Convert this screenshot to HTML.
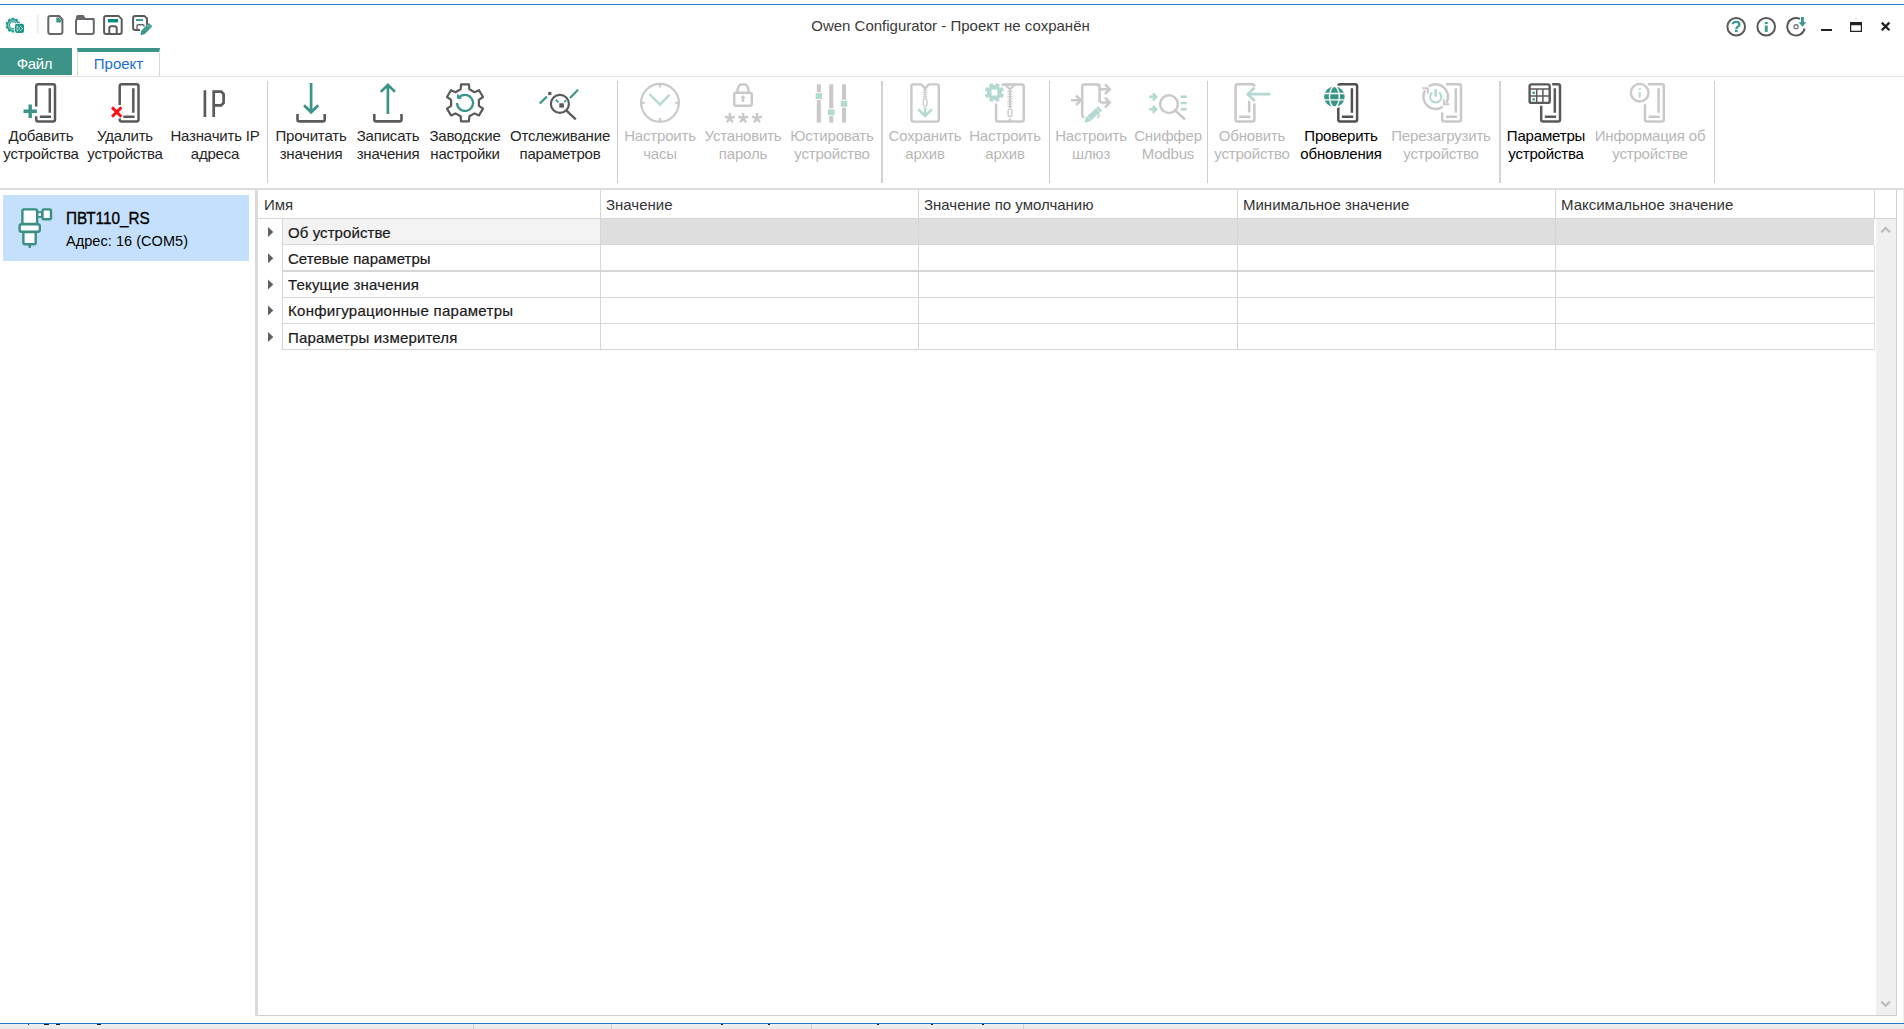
<!DOCTYPE html>
<html lang="ru">
<head>
<meta charset="utf-8">
<title>Owen Configurator</title>
<style>
html,body{margin:0;padding:0;background:#fff;}
body{width:1904px;height:1029px;position:relative;overflow:hidden;font-family:"Liberation Sans",sans-serif;font-size:15px;color:#1e1e1e;}
.abs{position:absolute;}
#topline{left:0;top:4px;width:1904px;height:1px;background:#1b7bd0;}
#botline{left:0;top:1023px;width:1904px;height:1px;background:#1b7bd0;}
#botband{left:0;top:1024px;width:1904px;height:5px;background:linear-gradient(#f1f1f1,#e7e7e7);}
.bm{top:1024px;height:1px;background:#1a1a1a;}
.bt{top:1024px;width:1px;height:5px;background:#cfcfcf;}
#title{left:0;top:17px;width:1901px;text-align:center;line-height:18px;color:#3a3a3a;}
#tabfile{left:0;top:48px;width:72px;height:27px;box-sizing:border-box;padding-right:3px;letter-spacing:-.35px;background:#3c9488;color:#fff;text-align:center;line-height:31px;}
#tabproj{left:77px;top:48px;width:83px;height:29px;box-sizing:border-box;border:1px solid #d9d9d9;border-top:4px solid #3c9488;border-bottom:none;background:#fff;color:#1a6fd0;text-align:center;line-height:23px;}
#tabline{left:0;top:76px;width:1904px;height:1px;background:#e4e4e4;}
#ribline{left:0;top:188px;width:1904px;height:2px;background:#dedede;}
.sep{top:81px;width:1px;height:102px;background:#cfcfcf;}
.lbl{top:127px;width:140px;text-align:center;line-height:18px;color:#262626;white-space:nowrap;letter-spacing:-0.18px;}
.lbl.d{color:#b7b7b7;}
#tile{left:3px;top:195px;width:246px;height:66px;background:#c4e0fc;}
#dname{left:66px;top:209px;font-size:17px;line-height:20px;color:#000;transform:scaleX(.9);transform-origin:0 0;-webkit-text-stroke:.35px #000;white-space:nowrap;}
#daddr{left:66px;top:232.5px;font-size:14.5px;line-height:17px;color:#000;white-space:nowrap;letter-spacing:.05px;}
#split{left:255px;top:190px;width:3px;height:826px;background:#dadada;}
#grid{left:258px;top:190px;width:1639px;height:826px;box-sizing:border-box;border-bottom:1px solid #d0d0d0;border-right:1px solid #d0d0d0;}
.hd{top:196px;line-height:18px;color:#333;white-space:nowrap;}
.vl{width:1px;background:#d6d6d6;}
.hl{height:1px;background:#d6d6d6;left:283px;width:1591px;}
.rt{left:288px;line-height:18px;color:#1a1a1a;white-space:nowrap;-webkit-text-stroke:.2px #1a1a1a;}
</style>
</head>
<body>
<div class="abs" id="topline"></div>
<div class="abs" id="title">Owen Configurator - Проект не сохранён</div>
<div class="abs" id="tabfile">Файл</div>
<div class="abs" id="tabproj">Проект</div>
<div class="abs" id="tabline"></div>
<div class="abs" id="ribline"></div>

<!-- ribbon separators -->
<div class="abs sep" style="left:267px"></div>
<div class="abs sep" style="left:617px"></div>
<div class="abs sep" style="left:881px;width:2px;background:#d4d4d4"></div>
<div class="abs sep" style="left:1049px"></div>
<div class="abs sep" style="left:1207px"></div>
<div class="abs sep" style="left:1499px;width:2px;background:#d4d4d4"></div>
<div class="abs sep" style="left:1714px"></div>

<!-- ribbon labels -->
<div class="abs lbl" style="left:-29px">Добавить<br>устройства</div>
<div class="abs lbl" style="left:55px">Удалить<br>устройства</div>
<div class="abs lbl" style="left:145px">Назначить IP<br>адреса</div>
<div class="abs lbl" style="left:241px">Прочитать<br>значения</div>
<div class="abs lbl" style="left:318px">Записать<br>значения</div>
<div class="abs lbl" style="left:395px">Заводские<br>настройки</div>
<div class="abs lbl" style="left:490px">Отслеживание<br>параметров</div>
<div class="abs lbl d" style="left:590px">Настроить<br>часы</div>
<div class="abs lbl d" style="left:673px">Установить<br>пароль</div>
<div class="abs lbl d" style="left:762px">Юстировать<br>устройство</div>
<div class="abs lbl d" style="left:855px">Сохранить<br>архив</div>
<div class="abs lbl d" style="left:935px">Настроить<br>архив</div>
<div class="abs lbl d" style="left:1021px">Настроить<br>шлюз</div>
<div class="abs lbl d" style="left:1098px">Сниффер<br>Modbus</div>
<div class="abs lbl d" style="left:1182px">Обновить<br>устройство</div>
<div class="abs lbl" style="left:1271px;color:#000">Проверить<br>обновления</div>
<div class="abs lbl d" style="left:1371px">Перезагрузить<br>устройство</div>
<div class="abs lbl" style="left:1476px;color:#000">Параметры<br>устройства</div>
<div class="abs lbl d" style="left:1580px">Информация об<br>устройстве</div>

<!-- left device panel -->
<div class="abs" id="tile"></div>
<div class="abs" id="dname">ПВТ110_RS</div>
<div class="abs" id="daddr">Адрес: 16 (COM5)</div>
<div class="abs" id="split"></div>

<!-- grid -->
<div class="abs" id="grid"></div>
<div class="abs" style="left:283px;top:219px;width:317px;height:25px;background:#f3f3f3"></div>
<div class="abs" style="left:601px;top:219px;width:1273px;height:25px;background:#dedede"></div>
<div class="abs" style="left:1876px;top:219px;width:20px;height:796px;background:#f0f0f0"></div>
<div class="abs hd" style="left:264px">Имя</div>
<div class="abs hd" style="left:606px">Значение</div>
<div class="abs hd" style="left:924px">Значение по умолчанию</div>
<div class="abs hd" style="left:1243px">Минимальное значение</div>
<div class="abs hd" style="left:1561px">Максимальное значение</div>
<div class="abs" style="left:258px;top:218px;width:1638px;height:1px;background:#d6d6d6"></div>
<div class="abs vl" style="left:600px;top:190px;height:160px"></div>
<div class="abs vl" style="left:918px;top:190px;height:160px"></div>
<div class="abs vl" style="left:1237px;top:190px;height:160px"></div>
<div class="abs vl" style="left:1555px;top:190px;height:160px"></div>
<div class="abs vl" style="left:1874px;top:190px;height:28px"></div>
<div class="abs vl" style="left:282px;top:219px;height:131px"></div>
<div class="abs vl" style="left:1874px;top:245px;height:105px;background:#e2e2e2"></div>
<div class="abs hl" style="top:244px"></div>
<div class="abs hl" style="top:270px;height:2px"></div>
<div class="abs hl" style="top:297px"></div>
<div class="abs hl" style="top:323px"></div>
<div class="abs hl" style="top:349px"></div>
<div class="abs rt" style="top:224px;letter-spacing:.08px">Об устройстве</div>
<div class="abs rt" style="top:250px;letter-spacing:.02px">Сетевые параметры</div>
<div class="abs rt" style="top:276px;letter-spacing:.18px">Текущие значения</div>
<div class="abs rt" style="top:302px;letter-spacing:.28px">Конфигурационные параметры</div>
<div class="abs rt" style="top:329px;letter-spacing:.17px">Параметры измерителя</div>

<div class="abs" id="redge" style="left:1903px;top:190px;width:1px;height:833px;background:#ededed"></div>
<div class="abs" id="botline"></div>
<div class="abs" id="botband"></div>
<div class="abs bm" style="left:28px;width:1px"></div>
<div class="abs bm" style="left:44px;width:5px"></div>
<div class="abs bm" style="left:56px;width:4px"></div>
<div class="abs bm" style="left:97px;width:4px"></div>
<div class="abs bm" style="left:721px;width:2px"></div>
<div class="abs bm" style="left:768px;width:2px"></div>
<div class="abs bm" style="left:877px;width:2px"></div>
<div class="abs bm" style="left:931px;width:2px"></div>
<div class="abs bm" style="left:982px;width:2px"></div>
<div class="abs bt" style="left:473px"></div>
<div class="abs bt" style="left:611px"></div>
<div class="abs bt" style="left:811px"></div>
<div class="abs bt" style="left:1023px"></div>

<!-- ICONS -->
<svg class="abs" style="left:0;top:0" width="1904" height="1029" viewBox="0 0 1904 1029" fill="none">
<!-- title bar: app icon -->
<path d="M19.3 25.5L20.4 26.2L19.7 28.6L18.4 28.5L17.9 29.1L18.5 30.3L16.4 31.9L15.4 31.0L14.7 31.3L14.4 32.6L11.8 32.6L11.5 31.3L10.8 31.1L9.8 32.0L7.7 30.5L8.2 29.3L7.7 28.7L6.4 28.8L5.6 26.4L6.7 25.7L6.7 24.9L5.6 24.2L6.3 21.8L7.6 21.9L8.1 21.3L7.5 20.1L9.6 18.5L10.6 19.4L11.3 19.1L11.6 17.8L14.2 17.8L14.5 19.1L15.2 19.3L16.2 18.4L18.3 19.9L17.8 21.1L18.3 21.7L19.6 21.6L20.4 24.0L19.3 24.7ZM13 22.300a2.900 2.900 0 1 0 0 5.800a2.900 2.900 0 1 0 0-5.800z" fill="#2a9b8e" fill-rule="evenodd"/>
<circle cx="13" cy="25.200" r="4.500" stroke="#bfe5df" stroke-width=".8"/>
<rect x="14.200" y="23" width="10.800" height="11" rx="2.500" fill="#fff"/>
<rect x="15" y="23.800" width="9" height="9.200" rx="2" fill="#1f9587"/>
<path d="M17 25.800l3 2.700-3 2.700zM19.800 25.800l3 2.700-3 2.700" fill="#1f9587" stroke="#cfeee9" stroke-width=".8"/>
<rect x="37" y="15" width="1.500" height="18" fill="#e6e6e6"/>
<!-- new document -->
<path d="M50.300 16h8.700l3.400 3.500v12.400a2 2 0 0 1-2 2h-10.100a2 2 0 0 1-2-2v-13.900a2 2 0 0 1 2-2z" stroke="#66676b" stroke-width="2" stroke-linejoin="round"/>
<path d="M56.300 17.400h2.200l2.700 2.800v2.300h-4.900z" fill="#3c9488"/>
<!-- folder -->
<path d="M76 17a2 2 0 0 1 2-2h5.500l2 3h8.300a1 1 0 0 1 1 1h-18.800z" fill="#66676b"/>
<rect x="76" y="19" width="17.800" height="14.900" rx="2" stroke="#66676b" stroke-width="2"/>
<!-- save -->
<path d="M106.100 16.100h12.600l3 3v12.800a2 2 0 0 1-2 2h-13.600a2 2 0 0 1-2-2v-13.800a2 2 0 0 1 2-2z" stroke="#5b5b5b" stroke-width="2" stroke-linejoin="round"/>
<rect x="108" y="19" width="10" height="3.400" fill="#008b80"/>
<path d="M109.300 33.500v-5.300a2 2 0 0 1 2-2h3.400a2 2 0 0 1 2 2v5.300" stroke="#5b5b5b" stroke-width="2"/>
<!-- save as -->
<path d="M140 29.900h-4.900a2 2 0 0 1-2-2v-9.800a2 2 0 0 1 2-2h9.500l2.400 2.400v7" stroke="#5b5b5b" stroke-width="2" stroke-linejoin="round"/>
<rect x="136" y="19.100" width="7" height="1.900" fill="#2f968a"/>
<path d="M137 29.500v-3.700a1 1 0 0 1 1-1h5a1 1 0 0 1 1 1v1" stroke="#6a6a6a" stroke-width="1.400"/>
<path d="M148.900 23.100L152.300 26.500L144.600 34.200L140.500 35.300L141.200 30.800Z" fill="#3c9a8e"/>
<path d="M147.300 24.700l3.400 3.400" stroke="#d5ece8" stroke-width=".6"/>
<!-- help / info / update -->
<circle cx="1736.200" cy="26.800" r="8.800" stroke="#5a5a5a" stroke-width="2"/>
<circle cx="1766.200" cy="26.800" r="8.800" stroke="#5a5a5a" stroke-width="2"/>
<path d="M1804.600 28.500a8.800 8.800 0 1 1-4.600-9.600" stroke="#5a5a5a" stroke-width="2"/>
<circle cx="1796.100" cy="26.700" r="2.100" stroke="#6a6a6a" stroke-width="1.100"/>
<path d="M1801 17h2.900v5.200h2.400l-3.800 4.600-3.900-4.600h2.400z" fill="#3a998d"/>
<rect x="1764.800" y="22" width="2.900" height="2" fill="#3a998d"/>
<rect x="1764.800" y="25.600" width="2.900" height="6.300" fill="#3a998d"/>
<path d="M1732.800 24.200c0-3.200 6.600-3.200 6.600.2 0 2.300-3.100 2.300-3.100 4.600" stroke="#3a998d" stroke-width="2.300"/>
<rect x="1735" y="29.800" width="2.600" height="2.300" fill="#3a998d"/>
<!-- window controls -->
<rect x="1821" y="29" width="11" height="2" fill="#222"/>
<path d="M1850 22h12v10h-12zM1851.200 25.300v5.500h9.600v-5.500z" fill="#222" fill-rule="evenodd"/>
<path d="M1881.800 22.600l7.600 7.600M1889.400 22.600l-7.600 7.600" stroke="#222" stroke-width="2.300"/>
<!--RIB-->
<path d="M36.2 106.6V86.3a2.0 2.0 0 0 1 2.0 -2.0H53.0a2.0 2.0 0 0 1 2.0 2.0V119.5a2.0 2.0 0 0 1 -2.0 2.0H38.2a2.0 2.0 0 0 1 -2.0 -2.0V116.2" stroke="#5a5a5a" stroke-width="2.5"/>
<path d="M49.8 88.3V112.8M39.8 116.7H51.1" stroke="#5a5a5a" stroke-width="2.5"/>
<path d="M23.5 111.2H36.9M30.2 104.5V117.9" stroke="#3c9488" stroke-width="3.4"/>
<path d="M119.7 104.9V86.3a2.0 2.0 0 0 1 2.0 -2.0H136.5a2.0 2.0 0 0 1 2.0 2.0V119.5a2.0 2.0 0 0 1 -2.0 2.0H121.7a2.0 2.0 0 0 1 -2.0 -2.0V118.6" stroke="#5a5a5a" stroke-width="2.5"/>
<path d="M133.3 88.3V112.8M123.3 116.7H134.6" stroke="#5a5a5a" stroke-width="2.5"/>
<path d="M112 107.4l9.4 9.4M121.4 107.4l-9.4 9.4" stroke="#ff0f1a" stroke-width="2.9"/>
<path d="M204.9 90.3V116.9M213.7 116.9V91.6H221.2L223.6 94V103L221.2 105.3H213.7" stroke="#5a5a5a" stroke-width="2.7" stroke-linejoin="miter"/>
<path d="M311.1 83V111.5M304 105.2l7.1 7.1 7.1-7.1" stroke="#3c9488" stroke-width="2.7"/>
<path d="M297.5 114V119.4a2 2 0 0 0 2 2H322.7a2 2 0 0 0 2-2V114" stroke="#5a5a5a" stroke-width="2.6"/>
<path d="M387.9 114V85.5M380.8 91.9l7.1-7.1 7.1 7.1" stroke="#3c9488" stroke-width="2.7"/>
<path d="M374.3 114V119.4a2 2 0 0 0 2 2H399.5a2 2 0 0 0 2-2V114" stroke="#5a5a5a" stroke-width="2.6"/>
<path d="M469.4 116.3L468.9 121.3L461.1 121.3L460.6 116.3L455.5 113.4L451.0 115.4L447.0 108.6L451.1 105.8L451.1 99.8L447.0 97.0L451.0 90.2L455.5 92.2L460.6 89.3L461.1 84.3L468.9 84.3L469.4 89.3L474.5 92.2L479.0 90.2L483.0 97.0L478.9 99.8L478.9 105.8L483.0 108.6L479.0 115.4L474.5 113.4Z" stroke="#5a5a5a" stroke-width="2.2" stroke-linejoin="round"/>
<path d="M458.4 98.4A8 8 0 1 1 457 103" stroke="#3c9488" stroke-width="2.3"/>
<path d="M457 93.5v5.2h5.2z" fill="#3c9488"/>
<circle cx="559.9" cy="103.9" r="9" stroke="#5a5a5a" stroke-width="2.2"/>
<path d="M566.5 110.6L575.8 119.3" stroke="#5a5a5a" stroke-width="2.4"/>
<path d="M539.8 103.5L547 96.5M570 98L578 89.8" stroke="#3c9488" stroke-width="2.2"/>
<path d="M555.8 99.7l2.6 2.7M564.2 102l2-1.6" stroke="#3c9488" stroke-width="1.8"/>
<rect x="548.2" y="91.9" width="3.2" height="3.2" fill="#5a5a5a"/>
<rect x="559.3" y="103.3" width="4.6" height="4.3" fill="#5a5a5a"/>
<circle cx="660" cy="102.8" r="18.9" stroke="#c9c9c9" stroke-width="2.2"/>
<path d="M660 84.5v3M660 118v3.2M641.7 102.8h3M675.2 102.8h3" stroke="#c9c9c9" stroke-width="2.1"/>
<path d="M649.4 94l10.5 10.5 9.6-9.8" stroke="#b4d8d2" stroke-width="2.3"/>
<rect x="734.2" y="92.7" width="17.6" height="13.1" rx="1.8" stroke="#c9c9c9" stroke-width="2.5"/>
<path d="M737.3 92.5C737.3 88 739.3 84.5 741 84.5H745C746.7 84.5 748.7 88 748.7 92.5" stroke="#c9c9c9" stroke-width="2.5"/>
<path d="M743 101.8V97" stroke="#c9c9c9" stroke-width="2.5"/><path d="M740.3 98.3L743 94.9L745.7 98.3Z" fill="#c9c9c9"/>
<path d="M729.8 118.2L729.8 113.0M729.8 118.2L734.7 116.6M729.8 118.2L732.9 122.4M729.8 118.2L726.7 122.4M729.8 118.2L724.9 116.6" stroke="#c9c9c9" stroke-width="2.3"/>
<path d="M743.2 118.2L743.2 113.0M743.2 118.2L748.1 116.6M743.2 118.2L746.3 122.4M743.2 118.2L740.1 122.4M743.2 118.2L738.3 116.6" stroke="#c9c9c9" stroke-width="2.3"/>
<path d="M757 118.2L757.0 113.0M757 118.2L761.9 116.6M757 118.2L760.1 122.4M757 118.2L753.9 122.4M757 118.2L752.1 116.6" stroke="#c9c9c9" stroke-width="2.3"/>
<rect x="816.8" y="84.3" width="4.1" height="38.3" fill="#c9c9c9"/>
<rect x="815.1999999999999" y="92.2" width="7.3" height="7.9" fill="#fff"/>
<rect x="815.5999999999999" y="93.2" width="6.5" height="5.9" fill="#b4d8d2"/>
<rect x="829.2" y="84.3" width="4.1" height="38.3" fill="#c9c9c9"/>
<rect x="827.6" y="108.3" width="7.3" height="7.9" fill="#fff"/>
<rect x="828.0" y="109.3" width="6.5" height="5.9" fill="#b4d8d2"/>
<rect x="842" y="84.3" width="4.1" height="38.3" fill="#c9c9c9"/>
<rect x="840.4" y="99.8" width="7.3" height="7.9" fill="#fff"/>
<rect x="840.8" y="100.8" width="6.5" height="5.9" fill="#b4d8d2"/>
<path d="M921.3 84.4H913.4a2 2 0 0 0-2 2V119.6a2 2 0 0 0 2 2H936.8a2 2 0 0 0 2-2V86.4a2 2 0 0 0-2-2H928.9L925.1 88.3z" stroke="#c9c9c9" stroke-width="2.4" stroke-linejoin="round"/>
<path d="M925.1 88.5V98" stroke="#c9c9c9" stroke-width="1.4"/>
<path d="M922.6 90h5M922.6 92.3h5M922.6 94.6h5M922.6 96.9h5" stroke="#c9c9c9" stroke-width="0.9"/>
<rect x="923.4" y="98.6" width="3.6" height="7.6" rx="1.7" stroke="#c9c9c9" stroke-width="1.3"/>
<path d="M925.1 107.5V115M918.3 109.3l6.8 6.8 6.8-6.8" stroke="#b4d8d2" stroke-width="2.5"/>
<path d="M996.1 103.5V119.6a2 2 0 0 0 2 2H1021.7a2 2 0 0 0 2-2V86.4a2 2 0 0 0-2-2H1001.7" stroke="#c9c9c9" stroke-width="2.5"/>
<path d="M1005.2 84.6L1010 89.5 1014.8 84.6M1010 89V108M1010 118.5V121.5" stroke="#c9c9c9" stroke-width="2.2"/>
<path d="M1007.3 91.5h5.4M1007.3 94h5.4M1007.3 96.5h5.4M1007.3 99h5.4M1007.3 101.5h5.4M1007.3 104h5.4M1007.3 106.5h5.4" stroke="#c9c9c9" stroke-width="0.9"/>
<rect x="1008.1" y="108.9" width="3.8" height="7.6" rx="1.8" stroke="#c9c9c9" stroke-width="1.4" fill="#fff"/>
<path d="M1001.7 93.3L1003.9 94.4L1002.5 97.9L1000.1 97.1L999.0 98.2L999.8 100.6L996.3 102.0L995.2 99.8L993.6 99.8L992.5 102.0L989.0 100.6L989.8 98.2L988.7 97.1L986.3 97.9L984.9 94.4L987.1 93.3L987.1 91.7L984.9 90.6L986.3 87.1L988.7 87.9L989.8 86.8L989.0 84.4L992.5 83.0L993.6 85.2L995.2 85.2L996.3 83.0L999.8 84.4L999.0 86.8L1000.1 87.9L1002.5 87.1L1003.9 90.6L1001.7 91.7ZM991.5 89.6V95.4H997.3V89.6Z" fill="#b4d8d2" fill-rule="evenodd"/>
<path d="M1099.6 102.5V86.4a2 2 0 0 0-2-2H1084.2a2 2 0 0 0-2 2V114.5a3 3 0 0 0 2 2.9" stroke="#c9c9c9" stroke-width="2.5"/>
<path d="M1071 100.3H1081M1076 95.5l4.8 4.8-4.8 4.8" stroke="#c9c9c9" stroke-width="2.5"/>
<path d="M1100 89.2H1110M1105 84.4l4.8 4.8-4.8 4.8M1100 102.5H1110M1105 97.7l4.8 4.8-4.8 4.8" stroke="#c9c9c9" stroke-width="2.5"/>
<path d="M1098.2 114.3l1.3 1.2-2.4 2.4" stroke="#c9c9c9" stroke-width="1.4"/>
<path d="M1098 106.3l4.2 4.2-12.4 11-5.3 1.2 1.2-5.2z" fill="#b4d8d2"/>
<path d="M1096 108.1l4.2 4.2M1087.2 116.3l3.8 3.8" stroke="#e3f1ef" stroke-width="0.9"/>
<circle cx="1169" cy="104.1" r="8.9" stroke="#c9c9c9" stroke-width="2.5"/>
<path d="M1175.5 110.6L1185 119.5" stroke="#c9c9c9" stroke-width="2.6"/>
<path d="M1149.2 96.8H1156M1152.8 93.3l3.5 3.5-3.5 3.5M1149.2 109.3H1156M1152.8 105.8l3.5 3.5-3.5 3.5" stroke="#b4d8d2" stroke-width="2.4"/>
<path d="M1180.6 96.8H1186.7M1180.6 103H1186.7M1180.6 109.3H1186.7" stroke="#b4d8d2" stroke-width="2.6"/>
<path d="M1235.6 119.5V86.3a2.0 2.0 0 0 1 2.0 -2.0H1252.3999999999999a2.0 2.0 0 0 1 2.0 2.0V85.5M1254.3999999999999 103.4V119.5a2.0 2.0 0 0 1 -2.0 2.0H1237.6a2.0 2.0 0 0 1 -2.0 -2.0V119.4" stroke="#c9c9c9" stroke-width="2.5"/>
<path d="M1249.2 100.8V112.4M1239.2 116.7H1250.5" stroke="#c9c9c9" stroke-width="2.5"/>
<path d="M1270.4 94.2H1248.5M1254.6 87.4l-6.8 6.8 6.8 6.8" stroke="#b4d8d2" stroke-width="2.7"/>
<path d="M1338.3 119.5V86.3a2.0 2.0 0 0 1 2.0 -2.0H1355.1a2.0 2.0 0 0 1 2.0 2.0V119.5a2.0 2.0 0 0 1 -2.0 2.0H1340.3a2.0 2.0 0 0 1 -2.0 -2.0V119.4" stroke="#505050" stroke-width="2.5"/>
<path d="M1351.9 88.3V112.8M1341.9 116.7H1353.2" stroke="#505050" stroke-width="2.5"/>
<circle cx="1334.4" cy="96.8" r="11.7" fill="#fff"/>
<circle cx="1334.4" cy="96.8" r="10.3" fill="#3a9589"/>
<path d="M1324 93.5H1345M1324 99.9H1345" stroke="#fff" stroke-width="1.3"/>
<ellipse cx="1334.4" cy="96.8" rx="4.9" ry="10.4" stroke="#fff" stroke-width="1.4"/>
<path d="M1446 84.3H1459.0a2.0 2.0 0 0 1 2.0 2.0V119.5a2.0 2.0 0 0 1 -2.0 2.0H1444.2a2.0 2.0 0 0 1 -2.0 -2.0V112.4" stroke="#c9c9c9" stroke-width="2.5"/>
<path d="M1455.8 88.3V112.8M1445.8 116.7H1457.1" stroke="#c9c9c9" stroke-width="2.5"/>
<path d="M1428.8 86.3A12.4 12.4 0 0 1 1446.4 102.8M1442.6 106.9A12.4 12.4 0 0 1 1425 90.4" stroke="#c9c9c9" stroke-width="2.5"/>
<path d="M1443.8 99.2V104.2H1449.3M1422.3 88.2H1427.8V93.7" stroke="#c9c9c9" stroke-width="1.9"/>
<path d="M1435.7 89.3V96.6" stroke="#b4d8d2" stroke-width="2.6"/>
<path d="M1439.150 92.590A5.6 5.6 0 1 1 1432.250 92.590" stroke="#b4d8d2" stroke-width="2"/>
<path d="M1552.2 84.3H1558.0a2.0 2.0 0 0 1 2.0 2.0V119.5a2.0 2.0 0 0 1 -2.0 2.0H1543.2a2.0 2.0 0 0 1 -2.0 -2.0V105.7" stroke="#5a5a5a" stroke-width="2.5"/>
<path d="M1554.8 88.3V112.8M1544.8 116.7H1556.1" stroke="#5a5a5a" stroke-width="2.5"/>
<rect x="1529.6" y="84.4" width="20.1" height="18.5" rx="2" stroke="#5a5a5a" stroke-width="2.4"/>
<path d="M1529.6 89H1549.7M1529.6 96H1549.7M1536.7 89V103M1542.9 89V103" stroke="#5a5a5a" stroke-width="1.5"/>
<rect x="1532.5" y="91.7" width="2.3" height="2.3" fill="#3c9488"/><rect x="1532.5" y="98.2" width="2.3" height="2.3" fill="#3c9488"/>
<path d="M1647.8 84.3H1661.8a2.0 2.0 0 0 1 2.0 2.0V119.5a2.0 2.0 0 0 1 -2.0 2.0H1647.0a2.0 2.0 0 0 1 -2.0 -2.0V104.3" stroke="#c9c9c9" stroke-width="2.5"/>
<path d="M1658.6 88.3V112.8M1648.6 116.7H1659.9" stroke="#c9c9c9" stroke-width="2.5"/>
<circle cx="1639.7" cy="92.7" r="8.8" stroke="#c9c9c9" stroke-width="2.4" fill="#fff"/>
<path d="M1639.7 88.3v1.8M1639.7 91.9v5.8" stroke="#b4d8d2" stroke-width="2"/>
<rect x="22.4" y="209.4" width="14.7" height="14.5" rx="1.5" stroke="#3a8f83" stroke-width="2.4" fill="#fff"/>
<rect x="37.5" y="212.2" width="4.5" height="4.7" stroke="#3a8f83" stroke-width="1.9" fill="#fff"/>
<rect x="42.5" y="209.4" width="8.5" height="9.8" rx="1.5" stroke="#3a8f83" stroke-width="2.4" fill="#fff"/>
<rect x="23.4" y="232" width="12.3" height="12.3" rx="1.5" stroke="#3a8f83" stroke-width="2.4" fill="#fff"/>
<rect x="19.6" y="224.3" width="20.2" height="7.4" rx="2" stroke="#3a8f83" stroke-width="2.4" fill="#fff"/>
<rect x="28.5" y="245" width="2.5" height="2.9" fill="#3a8f83"/>
<path d="M268 227L273.3 232L268 237Z" fill="#606060"/>
<path d="M268 253.2L273.3 258.2L268 263.2Z" fill="#606060"/>
<path d="M268 279.4L273.3 284.4L268 289.4Z" fill="#606060"/>
<path d="M268 305.6L273.3 310.6L268 315.6Z" fill="#606060"/>
<path d="M268 332L273.3 337L268 342Z" fill="#606060"/>
<path d="M1881.3 232.3l4.3-4.3 4.3 4.3" stroke="#bcbcbc" stroke-width="2.2"/>
<path d="M1881.3 1001.5l4.3 4.3 4.3-4.3" stroke="#bcbcbc" stroke-width="2.2"/>
<!--/RIB-->
</svg>
</body>
</html>
